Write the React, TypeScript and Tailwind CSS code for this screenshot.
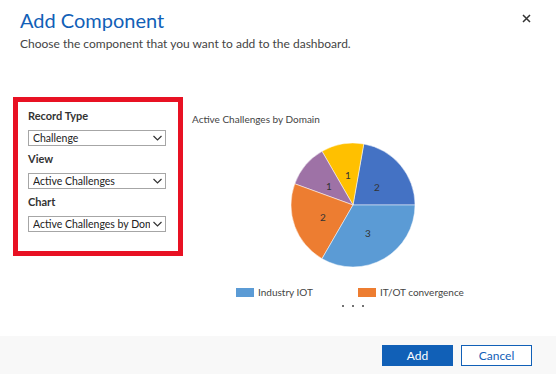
const fields = [
  { label: 'Record Type', value: 'Challenge' },
  { label: 'View', value: 'Active Challenges' },
  { label: 'Chart', value: 'Active Challenges by Domain' },
]

// pie slices, center 65,65 r 62
const slices = [
  { d: 'M65 65 L127 65 A62 62 0 0 0 75.77 3.94 Z', fill: '#4472c4', label: '2', x: 89, y: 47 },
  { d: 'M65 65 L75.77 3.94 A62 62 0 0 0 34 11.31 Z', fill: '#ffc000', label: '1', x: 60, y: 35 },
  { d: 'M65 65 L34 11.31 A62 62 0 0 0 6.74 43.8 Z', fill: '#9e72a6', label: '1', x: 41, y: 46 },
  { d: 'M65 65 L6.74 43.8 A62 62 0 0 0 34 118.69 Z', fill: '#ed7d31', label: '2', x: 35, y: 77 },
  { d: 'M65 65 L34 118.69 A62 62 0 0 0 127 65 Z', fill: '#5b9bd5', label: '3', x: 80, y: 93 },
]

function Chevron() {
  return (
    <svg width="9" height="6" viewBox="0 0 9 6" className="shrink-0">
      <polyline points="0.5,1 4.5,5 8.5,1" fill="none" stroke="#333" strokeWidth="1.2" />
    </svg>
  )
}

export default function App() {
  return (
    <div
      className="w-[556px] h-[374px] bg-white flex flex-col overflow-hidden text-[#333]"
      style={{ fontFamily: '"Segoe UI", Lato, sans-serif' }}
    >
      <div className="pl-5 pr-[25px]">
        <div className="flex items-center justify-between h-[36px]">
          <h1 className="text-[20px] leading-[30px] pt-[4px] text-[#1160b7]">Add Component</h1>
          <button aria-label="Close" className="w-[10px] h-[10px] flex items-center justify-center">
            <svg width="9" height="9" viewBox="0 0 9 9">
              <path d="M1 1 L8 8 M8 1 L1 8" stroke="#333" strokeWidth="1.5" />
            </svg>
          </button>
        </div>
        <p className="text-[12px] leading-[16px] text-[#444]">
          Choose the component that you want to add to the dashboard.
        </p>
      </div>

      <div className="flex-1 flex pl-[13px] pt-[45px]">
        <div className="w-[170px] h-[159px] border-[5px] border-[#e81123] pl-[10px] pr-[12px] pt-[6px] flex flex-col">
          {fields.map(f => (
            <div key={f.label} className="flex flex-col mb-[5px]">
              <label className="text-[11px] leading-[16px] font-bold text-[#333]">{f.label}</label>
              <div className="mt-[6px] h-[16px] border border-[#a6a6a6] flex items-center pl-[4px] pr-[3px] gap-[3px]">
                <span className="flex-1 text-[10.5px] leading-[14px] text-[#222] whitespace-nowrap overflow-hidden">
                  {f.value}
                </span>
                <Chevron />
              </div>
            </div>
          ))}
        </div>

        <div className="ml-[9px] flex flex-col">
          <div className="mt-[16px] text-[10px] leading-[13px] text-[#444]">Active Challenges by Domain</div>
          <svg width="130" height="130" viewBox="0 0 130 130" className="mt-[14px] ml-[96px]">
            {slices.map((s, i) => (
              <path key={i} d={s.d} fill={s.fill} stroke="#fff" strokeWidth="0.5" />
            ))}
            {slices.map((s, i) => (
              <text
                key={'t' + i}
                x={s.x}
                y={s.y}
                fontSize="10"
                fill="#333"
                textAnchor="middle"
                dominantBaseline="central"
              >
                {s.label}
              </text>
            ))}
          </svg>
          <div className="mt-[15px] ml-[44px] flex items-center text-[10px] leading-[14px] text-[#444]">
            <span className="w-[18px] h-[9px] bg-[#5b9bd5]" />
            <span className="ml-[4px]">Industry IOT</span>
            <span className="ml-[45px] w-[18px] h-[9px] bg-[#ed7d31]" />
            <span className="ml-[4px]">IT/OT convergence</span>
          </div>
          <div className="mt-[6px] ml-[150px] flex gap-[8px]">
            <span className="w-[2px] h-[2px] rounded-full bg-[#444]" />
            <span className="w-[2px] h-[2px] rounded-full bg-[#444]" />
            <span className="w-[2px] h-[2px] rounded-full bg-[#444]" />
          </div>
        </div>
      </div>

      <div className="h-[38px] bg-[#f8f8f8] flex items-start justify-end gap-[8px] pr-[24px] pt-[9px]">
        <button className="w-[71px] h-[21px] bg-[#1160b7] text-white text-[12px] leading-[14px]">Add</button>
        <button className="w-[71px] h-[21px] bg-white border border-[#1160b7] text-[#1160b7] text-[12px] leading-[14px]">
          Cancel
        </button>
      </div>
    </div>
  )
}
